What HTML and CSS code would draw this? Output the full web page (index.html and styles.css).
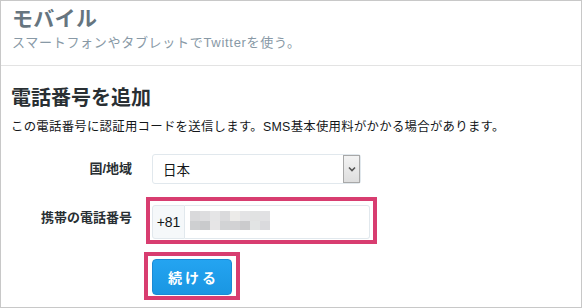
FILE: index.html
```html
<!DOCTYPE html>
<html lang="ja">
<head>
<meta charset="utf-8">
<title>モバイル</title>
<link rel="stylesheet" href="styles.css">
</head>
<body>
<div class="frame">
  <header class="page-header">
    <h1 class="page-title">モバイル</h1>
    <p class="page-subtitle">スマートフォンやタブレットでTwitterを使う。</p>
  </header>
  <main class="content">
    <h2 class="section-title">電話番号を追加</h2>
    <p class="section-desc">この電話番号に認証用コードを送信します。SMS基本使用料がかかる場合があります。</p>
    <div class="form">
      <div class="form-row">
        <label class="form-label">国/地域</label>
        <div class="form-control">
          <div class="select">
            <span class="select-value">日本</span>
            <span class="select-btn">
              <svg width="8" height="6" viewBox="0 0 8 6"><path d="M1 1.5 L4 4.5 L7 1.5" fill="none" stroke="#555" stroke-width="1.6"/></svg>
            </span>
          </div>
        </div>
      </div>
      <div class="form-row form-row-phone">
        <label class="form-label label-phone">携帯の電話番号</label>
        <div class="form-control">
          <div class="highlight highlight-phone">
            <div class="input-group">
              <span class="input-prefix">+81</span>
              <div class="input-field">
                <div class="blur">
                  <span></span><span></span><span></span><span></span><span></span><span></span><span></span><span></span>
                  <span></span><span></span><span></span><span></span><span></span><span></span><span></span><span></span>
                </div>
              </div>
            </div>
          </div>
        </div>
      </div>
      <div class="form-row form-row-submit">
        <span class="form-label"></span>
        <div class="form-control">
          <div class="highlight highlight-btn">
            <button class="btn-primary">続ける</button>
          </div>
        </div>
      </div>
    </div>
  </main>
</div>
</body>
</html>
```

FILE: styles.css
```css
* { box-sizing: border-box; }
html, body { margin: 0; padding: 0; background: #fff; }
body {
  font-family: "Liberation Sans", "Noto Sans CJK JP", Arial, sans-serif;
  color: #14171a;
}
.frame {
  width: 582px;
  height: 308px;
  border: 1px solid #c8c8c8;
  overflow: hidden;
  background: #fff;
}
.page-header {
  padding: 7px 11px 14px;
  border-bottom: 1px solid #e3e3e3;
}
.page-title {
  margin: 0;
  font-size: 21px;
  line-height: 22px;
  font-weight: bold;
  color: #66757f;
  letter-spacing: 0.3px;
}
.page-subtitle {
  margin: 5px 0 0;
  font-size: 13px;
  line-height: 16px;
  color: #8899a6;
  letter-spacing: 0.7px;
}
.content {
  padding: 20px 10px 0;
}
.section-title {
  margin: 0;
  font-size: 20px;
  line-height: 24px;
  font-weight: bold;
  color: #292f33;
}
.section-desc {
  margin: 9px 0 0;
  font-size: 12.4px;
  line-height: 16px;
  color: #14171a;
  letter-spacing: 0.27px;
}
.form {
  margin-top: 19px;
  display: flex;
  flex-direction: column;
}
.form-row {
  display: grid;
  grid-template-columns: 121px 1fr;
  column-gap: 12px;
  align-items: center;
}
.form-row-phone { margin-top: 13px; }
.form-row-submit { margin-top: 8px; }
.form-label {
  text-align: right;
  font-size: 13px;
  line-height: 16px;
  font-weight: bold;
  color: #292f33;
}
.label-phone { padding-bottom: 5px; }
.select {
  margin-left: 8px;
  width: 209px;
  height: 30px;
  border: 1px solid #e1e8ed;
  border-radius: 3px;
  display: flex;
  align-items: center;
  justify-content: space-between;
  padding-left: 10px;
  background: #fff;
}
.select-value {
  font-size: 13.5px;
  color: #14171a;
}
.select-btn {
  width: 17px;
  height: 28px;
  border: 1px solid #a8a8a8;
  background: linear-gradient(#f3f3f3, #dedede);
  display: flex;
  align-items: center;
  justify-content: center;
}
.highlight {
  display: inline-block;
  border: 4px solid #d83d70;
}
.highlight-phone {
  margin-left: 2px;
  padding: 4px 3px 1px 2px;
}
.highlight-btn {
  padding: 3px 4px 1px 4px;
}
.input-group {
  display: flex;
  width: 218px;
  height: 34px;
}
.input-prefix {
  width: 33px;
  background: #f5f8fa;
  border: 1px solid #e1e8ed;
  border-radius: 3px 0 0 3px;
  display: flex;
  align-items: center;
  justify-content: center;
  font-size: 14px;
  color: #14171a;
}
.input-field {
  flex: 1;
  border: 1px solid #e1e8ed;
  border-left: none;
  border-radius: 0 3px 3px 0;
  background: #fff;
  padding: 5px 0 0 5px;
}
.blur {
  display: grid;
  grid-template-columns: repeat(8, 10px);
  grid-template-rows: 10px 9px;
}
.blur span:nth-child(1) { background: #d9d9db; }
.blur span:nth-child(2) { background: #dddddf; }
.blur span:nth-child(3) { background: #e5e5e6; }
.blur span:nth-child(4) { background: #dadadc; }
.blur span:nth-child(5) { background: #ecebe9; }
.blur span:nth-child(6) { background: #e3e3e5; }
.blur span:nth-child(7) { background: #e1e2e2; }
.blur span:nth-child(8) { background: #e1e1e3; }
.blur span:nth-child(9) { background: #cecfd1; }
.blur span:nth-child(10) { background: #c9cacc; }
.blur span:nth-child(11) { background: #e6e5e6; }
.blur span:nth-child(12) { background: #d2d3d5; }
.blur span:nth-child(13) { background: #d2d2d4; }
.blur span:nth-child(14) { background: #cbcbcd; }
.blur span:nth-child(15) { background: #e2e4e4; }
.blur span:nth-child(16) { background: #dadadd; }
.btn-primary {
  display: block;
  width: 80px;
  height: 36px;
  border: 1px solid #1a8ad5;
  border-radius: 4px;
  background: linear-gradient(#24a4f1, #1a96e2);
  color: #fff;
  font-family: "Liberation Sans", "Noto Sans CJK JP", sans-serif;
  font-size: 14px;
  font-weight: bold;
  letter-spacing: 3px;
  padding: 0 0 0 3px;
  cursor: pointer;
}
```
